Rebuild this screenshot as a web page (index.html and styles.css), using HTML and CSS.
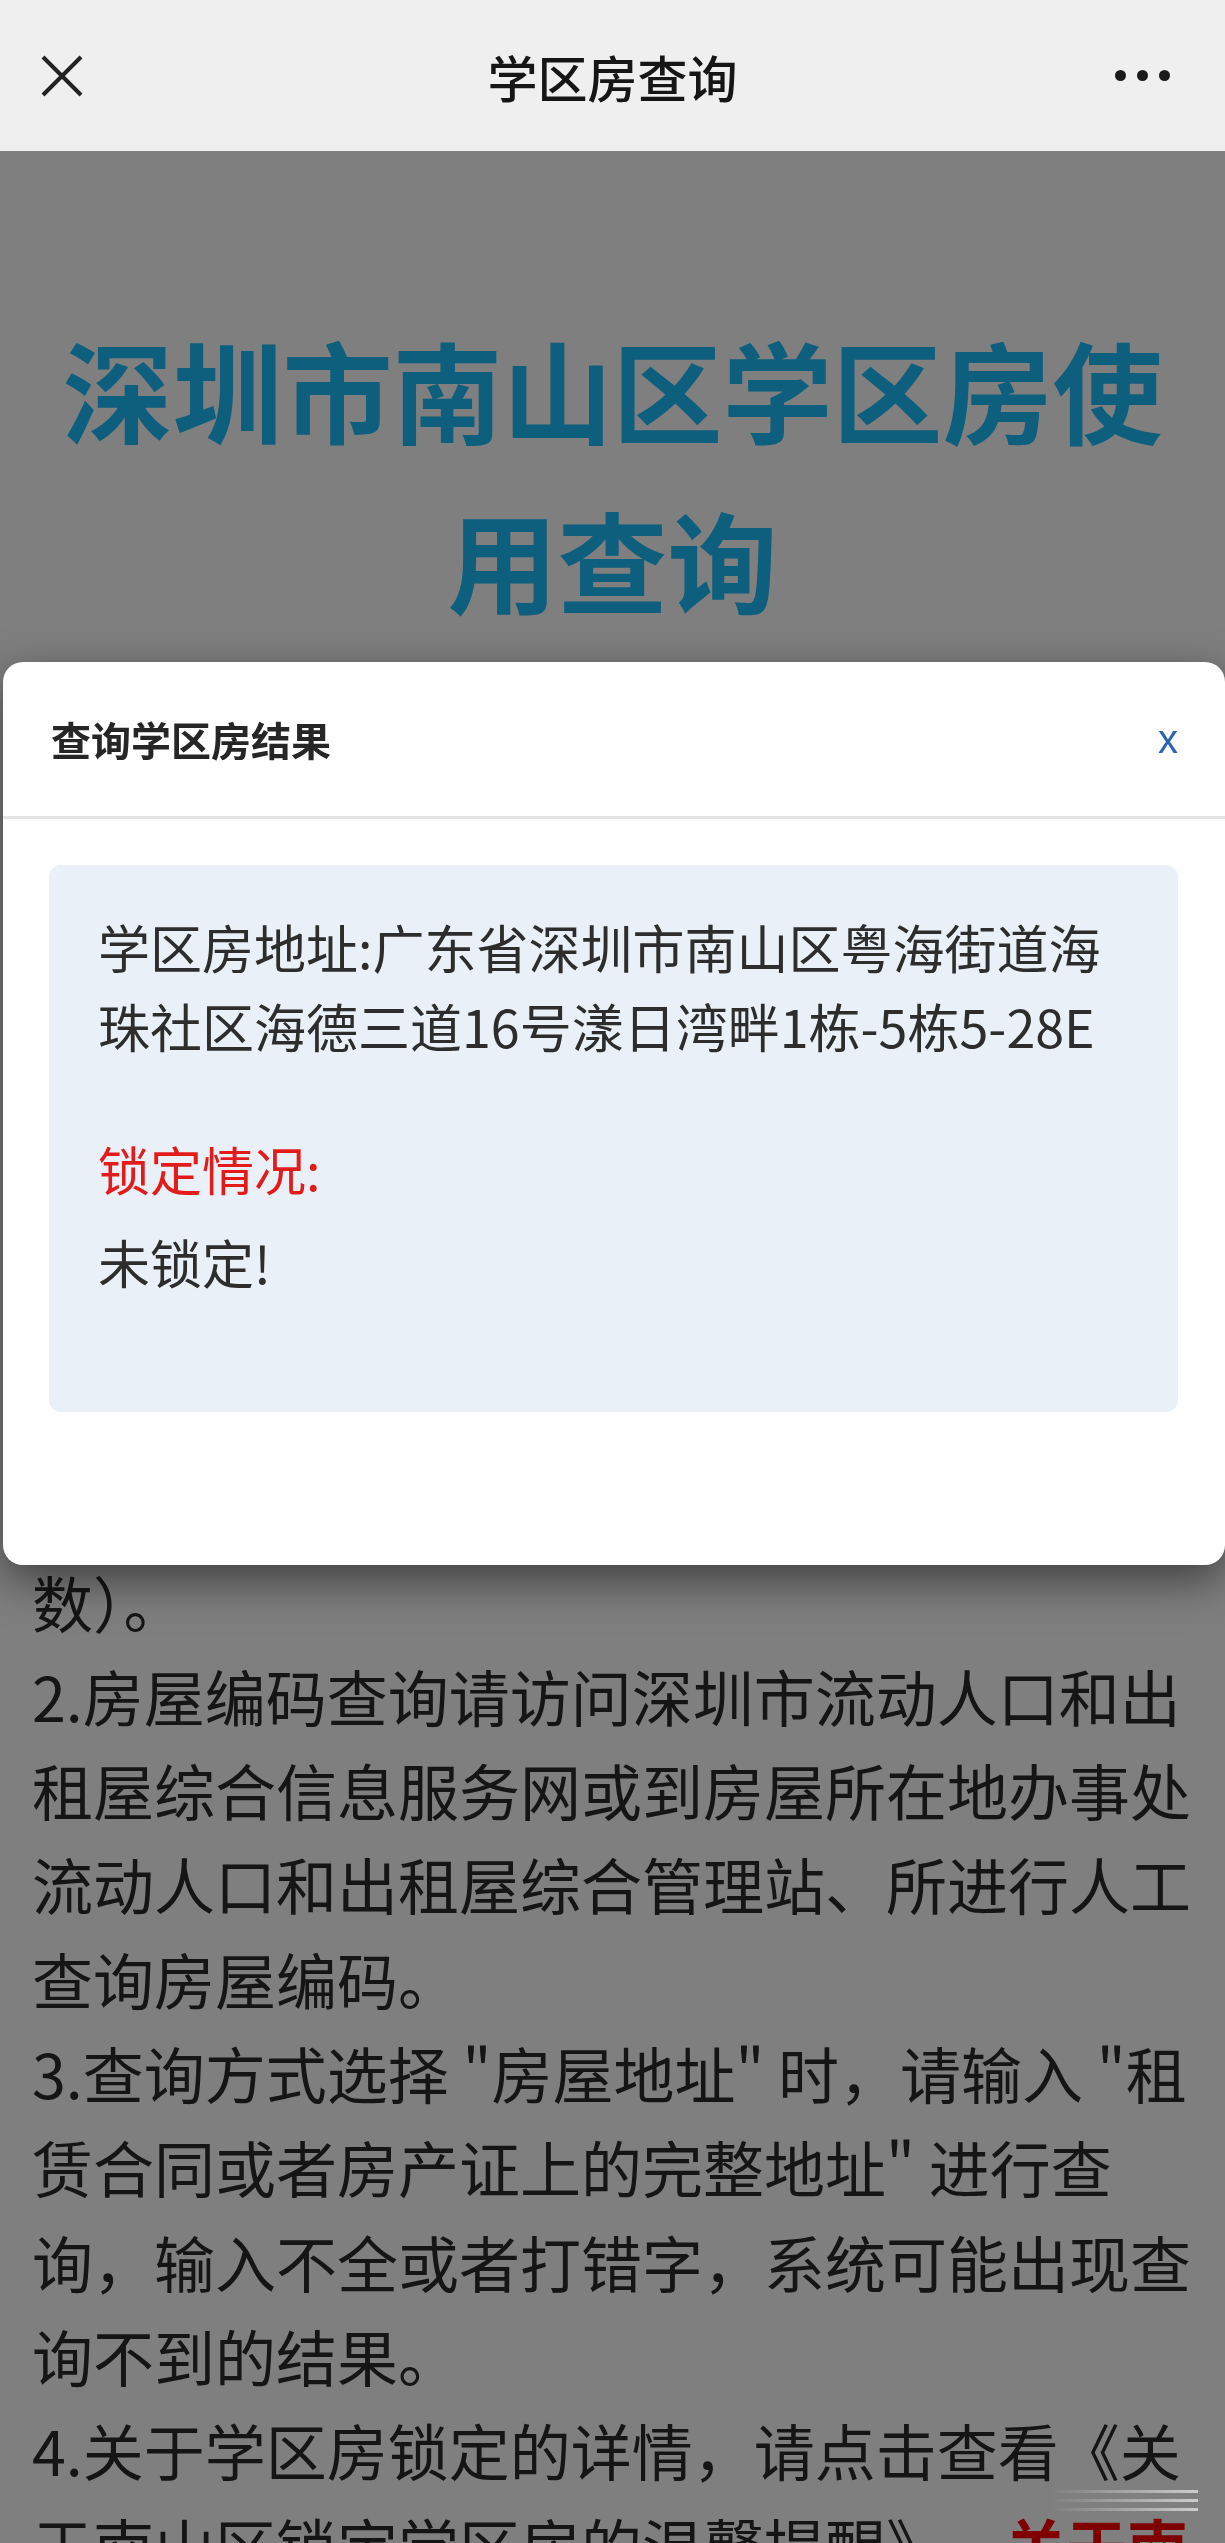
FILE: index.html
```html
<!DOCTYPE html>
<html lang="zh-CN">
<head>
<meta charset="utf-8">
<title>学区房查询</title>
<link rel="stylesheet" href="styles.css">
</head>
<body>
<header class="topbar">
  <button class="topbar-close" type="button" aria-label="关闭">
    <svg viewBox="0 0 42 42" width="42" height="42"><path d="M2 2 L40 40 M40 2 L2 40" stroke="#222" stroke-width="4" fill="none"/></svg>
  </button>
  <h1 class="topbar-title">学区房查询</h1>
  <div class="topbar-more" aria-label="更多"><span></span><span></span><span></span></div>
</header>

<main class="page">
  <h2 class="page-heading">深圳市南山区学区房使用查询</h2>
  <form class="query-form" aria-hidden="true">
    <input class="form-control" type="text" aria-label="查询方式">
    <input class="form-control" type="text" aria-label="房屋地址">
    <div class="query-btn"></div>
  </form>
  <div class="notes">
    <p>1.查询方式选择房屋编码时，请输入完整的房屋编码（房屋编码为十八位或二十位的整数）。</p>
    <p>2.房屋编码查询请访问深圳市流动人口和出租屋综合信息服务网或到房屋所在地办事处流动人口和出租屋综合管理站、所进行人工查询房屋编码。</p>
    <p>3.查询方式选择 "房屋地址" 时，请输入 "租赁合同或者房产证上的完整地址" 进行查询，输入不全或者打错字，系统可能出现查询不到的结果。</p>
    <p>4.关于学区房锁定的详情，请点击查看《关于南山区锁定学区房的温馨提醒》<a class="notice-link" href="#">关于南山区锁定学区房的温馨提醒</a></p>
  </div>
</main>

<div class="backdrop"></div>

<div class="modal" role="dialog" aria-labelledby="modal-title">
  <div class="modal-header">
    <h4 class="modal-title" id="modal-title">查询学区房结果</h4>
    <button class="modal-close" type="button">x</button>
  </div>
  <div class="modal-body">
    <div class="result-box">
      <p class="result-address">学区房地址:广东省深圳市南山区粤海街道海珠社区海德三道16号漾日湾畔1栋-5栋5-28E</p>
      <p class="result-label">锁定情况:</p>
      <p class="result-status">未锁定!</p>
    </div>
  </div>
</div>

<div class="float-ghost" aria-hidden="true"><i></i><i></i><i></i></div>
</body>
</html>
```

FILE: styles.css
```css
html {
  overflow: hidden;
}

body {
  margin: 0;
  background: #ffffff;
  color: #2b2b2b;
  font-family: "Noto Sans CJK SC", "Noto Sans", sans-serif;
  position: relative;
}

/* top browser bar */
.topbar {
  height: 151px;
  background: #efefef;
  display: grid;
  grid-template-columns: 1fr auto 1fr;
  align-items: center;
  padding: 0 41px;
  box-sizing: border-box;
}

.topbar-close {
  justify-self: start;
  background: none;
  border: 0;
  padding: 0;
  width: 42px;
  height: 42px;
  display: block;
}

.topbar-close svg {
  display: block;
}

.topbar-title {
  margin: 0;
  font-size: 50px;
  font-weight: 500;
  line-height: 1.2;
  color: #161616;
}

.topbar-more {
  justify-self: end;
  margin-right: 14px;
  display: flex;
  gap: 11px;
}

.topbar-more span {
  width: 11px;
  height: 11px;
  border-radius: 50%;
  background: #1a1a1a;
}

/* page underneath */
.page-heading {
  margin: 152px 40px 0;
  font-size: 110px;
  line-height: 170px;
  font-weight: 700;
  text-align: center;
  color: #1cbdfa;
}

.query-form {
  height: 723px;
  box-sizing: border-box;
  padding: 90px 60px 0;
  display: flex;
  flex-direction: column;
  gap: 40px;
}

.form-control {
  height: 110px;
  font-size: 44px;
  border: 2px solid #ccc;
  border-radius: 10px;
  padding: 0 20px;
  font-family: inherit;
}

.query-btn {
  height: 120px;
  background: #1cbdfa;
  border-radius: 12px;
}

.notes {
  padding: 0 29px 0 32px;
  font-size: 61px;
  line-height: 94.3px;
}

.notes p {
  margin: 0;
}

.notice-link {
  margin-left: 58px;
  color: #ff0000;
  font-weight: 700;
  text-decoration: none;
}

/* overlay */
.backdrop {
  position: fixed;
  top: 151px;
  left: 0;
  right: 0;
  bottom: 0;
  background: rgba(0, 0, 0, 0.5);
  z-index: 2;
}

.modal {
  position: absolute;
  top: 662px;
  left: 3px;
  width: 1222px;
  height: 903px;
  background: #ffffff;
  border-radius: 20px;
  box-shadow: 0 15px 45px rgba(0, 0, 0, 0.5);
  z-index: 10;
  box-sizing: border-box;
}

.modal-header {
  height: 157px;
  box-sizing: border-box;
  border-bottom: 3px solid #e5e5e5;
  display: flex;
  align-items: center;
  justify-content: space-between;
  padding: 0 47px 0 48px;
}

.modal-title {
  margin: 0;
  font-size: 40px;
  line-height: 1.2;
  font-weight: 700;
  color: #262626;
}

.modal-close {
  background: none;
  border: 0;
  padding: 0;
  font-family: "Liberation Sans", Arial, sans-serif;
  font-size: 40px;
  line-height: 1;
  color: #2c62b3;
}

.modal-body {
  padding: 46px 47px 0 46px;
}

.result-box {
  background: #e9f0f7;
  border-radius: 12px;
  padding: 42px 49px 111px;
  font-size: 52px;
  line-height: 79px;
  color: #2d2d2d;
}

.result-box p {
  margin: 0;
}

.result-address {
  margin-bottom: 64px !important;
}

.result-label {
  color: #e31b1b;
  margin-bottom: 14px !important;
}

/* faint floating ghost at bottom right */
.float-ghost {
  position: absolute;
  top: 2490px;
  left: 1050px;
  width: 148px;
  display: flex;
  flex-direction: column;
  gap: 6px;
  z-index: 5;
}

.float-ghost i {
  display: block;
  height: 3px;
  background: linear-gradient(to right, rgba(255, 255, 255, 0), rgba(255, 255, 255, 0.6));
}
```
